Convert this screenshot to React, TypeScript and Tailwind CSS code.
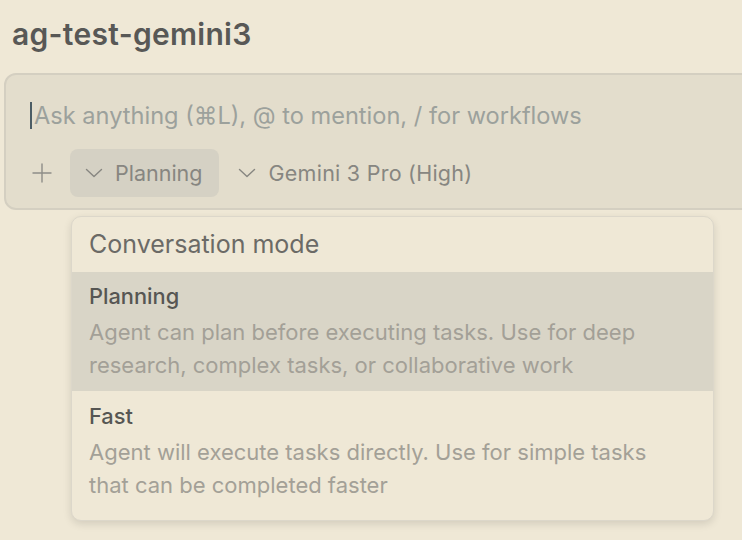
const modes = [
  {
    title: "Planning",
    desc: "Agent can plan before executing tasks. Use for deep research, complex tasks, or collaborative work",
    active: true,
  },
  {
    title: "Fast",
    desc: "Agent will execute tasks directly. Use for simple tasks that can be completed faster",
    active: false,
  },
];

// thin chevron used in the chips
const Chevron = () => (
  <svg width="18" height="10" viewBox="0 0 18 10" fill="none" className="shrink-0">
    <path d="M1.5 1.5 9 8.5l7.5-7" stroke="currentColor" strokeWidth="1.4" strokeLinecap="round" strokeLinejoin="round" />
  </svg>
);

const PlusIcon = () => (
  <svg width="20" height="20" viewBox="0 0 20 20" fill="none" className="shrink-0">
    <path d="M10 1v18M1 10h18" stroke="currentColor" strokeWidth="1.4" strokeLinecap="round" />
  </svg>
);

export default function App() {
  return (
    <div
      className="w-[742px] h-[540px] overflow-hidden bg-[#efe8d6] text-[#5a5a58]"
      style={{ fontFamily: "Inter, 'Noto Sans', sans-serif" }}
    >
      <div className="pl-[12px] pt-[14px] h-[73px]">
        <h1 className="text-[30px] leading-[40px] font-semibold tracking-[0.3px] text-[#585856]">ag-test-gemini3</h1>
      </div>

      <div className="ml-[4px] w-[760px] h-[137px] rounded-[12px] border-2 border-[#d4cfc1] bg-[#e3ddcc] flex flex-col">
        <div className="pl-[24px] pt-[27px] h-[74px] flex items-start">
          <span className="w-[2px] h-[27px] bg-[#4c5d65] mr-[2px]" />
          <span className="text-[23.6px] leading-[27px] text-[#9ca19c]">
            Ask anything (⌘L), @ to mention, / for workflows
          </span>
        </div>
        <div className="flex items-center pl-[26px] gap-[18px]">
          <span className="text-[#8e8d88]">
            <PlusIcon />
          </span>
          <div className="flex items-center gap-[12px] h-[48px] pl-[15px] pr-[16px] rounded-[8px] bg-[#d5d1c4] text-[#878681]">
            <Chevron />
            <span className="text-[21.5px]">Planning</span>
          </div>
          <div className="flex items-center gap-[13px] pl-[1px] text-[#878681]">
            <Chevron />
            <span className="text-[21.5px] tracking-[0.25px]">Gemini 3 Pro (High)</span>
          </div>
        </div>
      </div>

      <div className="ml-[71px] mt-[6px] w-[643px] rounded-[10px] border border-[#dcd7ca] bg-[#efe8d6] shadow-[0_3px_8px_rgba(0,0,0,0.12)] overflow-hidden">
        <div className="h-[55px] pl-[17px] flex items-center text-[25px] text-[#6b6a66]">Conversation mode</div>
        {modes.map((m) => (
          <div
            key={m.title}
            className={m.active ? "bg-[#d9d5c7] pl-[17px] pt-[9px] pb-[9px]" : "pl-[17px] pt-[10px] pb-[18px]"}
          >
            <div className="text-[21.8px] leading-[30px] font-medium text-[#565653]">{m.title}</div>
            <div className="w-[580px] text-[22px] leading-[33px] text-[#a3a097] mt-[5px]">{m.desc}</div>
          </div>
        ))}
      </div>
    </div>
  );
}
